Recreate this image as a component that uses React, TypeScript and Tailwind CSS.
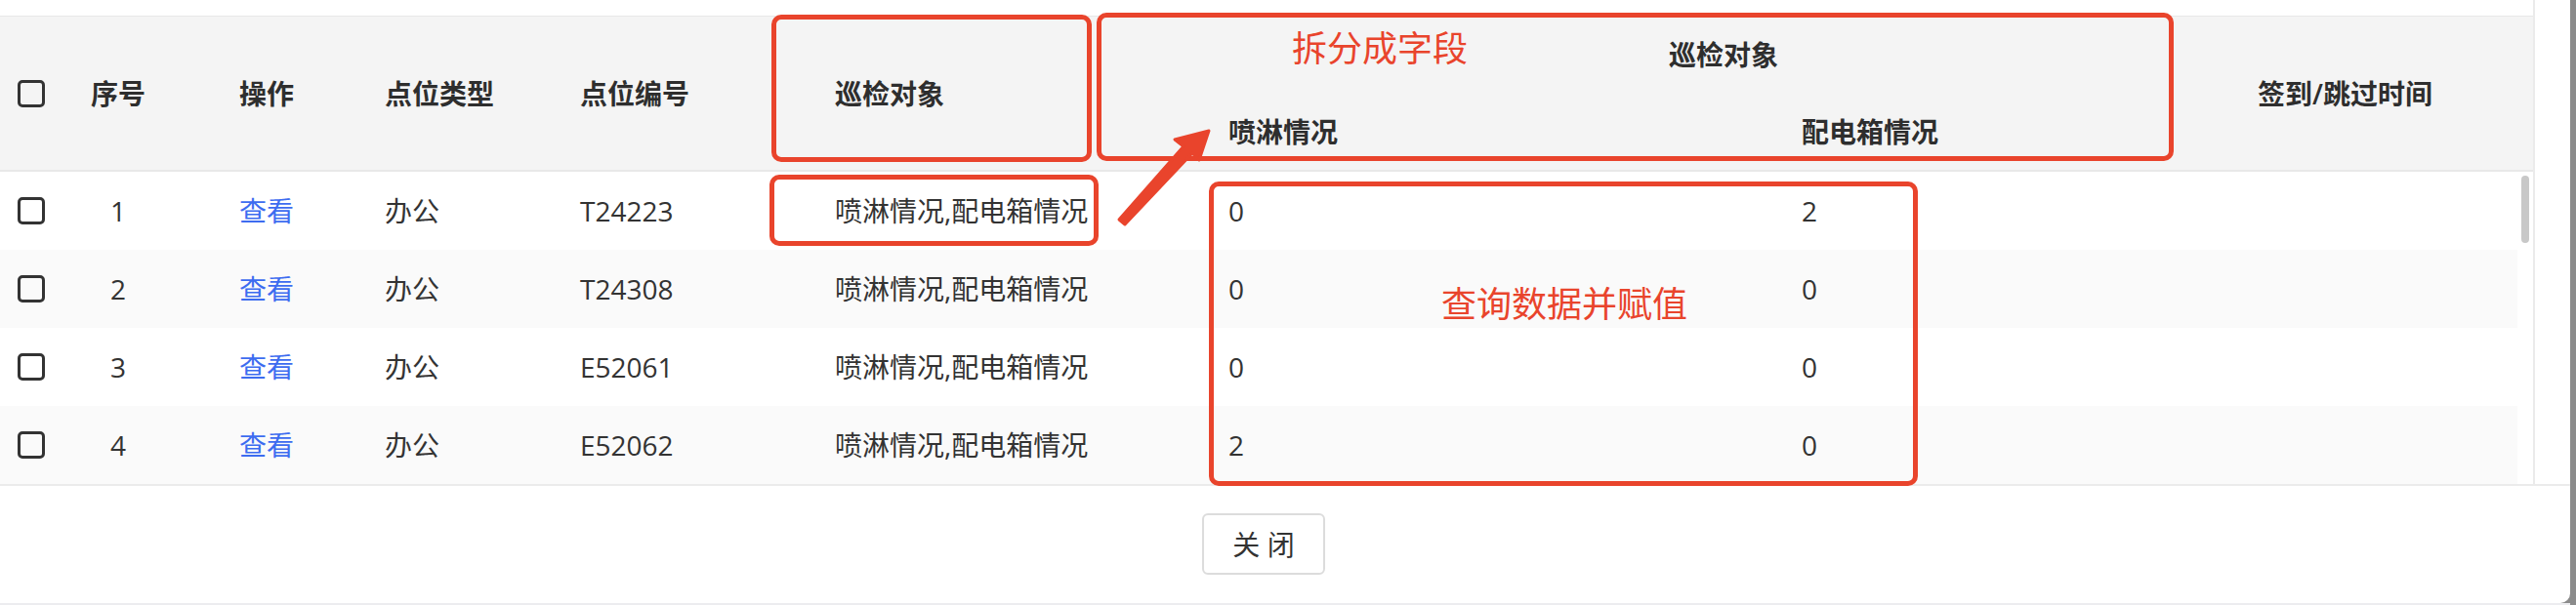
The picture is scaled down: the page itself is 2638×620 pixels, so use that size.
import React from "react";

const headCols =
  "grid grid-cols-[64px_114px_196px_200px_261px_403px_587px_467px_302px] grid-rows-[78px_79px]";
const bodyCols =
  "grid grid-cols-[64px_114px_196px_200px_261px_403px_587px_467px_286px]";

const rows = [
  { n: "1", code: "T24223", a: "0", b: "2" },
  { n: "2", code: "T24308", a: "0", b: "0" },
  { n: "3", code: "E52061", a: "0", b: "0" },
  { n: "4", code: "E52062", a: "2", b: "0" },
];

function Checkbox() {
  return <div className="w-[28px] h-[28px] border-[3px] border-[#333333] rounded-[5px]" />;
}

export default function App() {
  return (
    <div className="w-[2638px] h-[620px] bg-[#8b8b8b] flex [font-family:'Open_Sans','Noto_Sans_CJK_SC',sans-serif] text-[28px] leading-none text-[#333333]">
      <div className="w-[2632px] flex flex-col">
        <div className="relative h-[618px] bg-white rounded-br-[10px] overflow-hidden flex flex-col">
          {/* table area */}
          <div className="flex border-b-2 border-[#ebebeb]">
            <div className="w-[2596px] border-r-2 border-[#ebebeb] pt-[16px]">
              {/* header */}
              <div className={`${headCols} bg-[#f4f4f4] border-t border-b-2 border-[#e8e8e8] font-semibold text-[#2e2e2e]`}>
                <div className="row-span-2 flex items-center pl-[18px]">
                  <Checkbox />
                </div>
                <div className="row-span-2 flex items-center justify-center">序号</div>
                <div className="row-span-2 flex items-center pl-[67px]">操作</div>
                <div className="row-span-2 flex items-center pl-[20px]">点位类型</div>
                <div className="row-span-2 flex items-center pl-[20px]">点位编号</div>
                <div className="row-span-2 flex items-center pl-[20px]">巡检对象</div>
                <div className="col-span-2 flex items-center justify-center">巡检对象</div>
                <div className="row-span-2 flex items-center pl-[20px]">签到/跳过时间</div>
                <div className="flex items-center pl-[20px]">喷淋情况</div>
                <div className="flex items-center pl-[20px]">配电箱情况</div>
              </div>
              {/* body */}
              <div className="flex">
                <div className="w-[2578px] flex flex-col">
                  {rows.map((r, i) => (
                    <div
                      key={r.n}
                      className={`${bodyCols} h-[80px] ${i % 2 === 1 ? "bg-[#fafafa]" : "bg-white"}`}
                    >
                      <div className="flex items-center pl-[18px]">
                        <Checkbox />
                      </div>
                      <div className="flex items-center justify-center">{r.n}</div>
                      <div className="flex items-center pl-[67px] text-[#3d6cf0]">查看</div>
                      <div className="flex items-center pl-[20px]">办公</div>
                      <div className="flex items-center pl-[20px]">{r.code}</div>
                      <div className="flex items-center pl-[20px]">喷淋情况,配电箱情况</div>
                      <div className="flex items-center pl-[20px]">{r.a}</div>
                      <div className="flex items-center pl-[20px]">{r.b}</div>
                      <div />
                    </div>
                  ))}
                </div>
                <div className="w-[16px] pt-[4px] pl-[4px]">
                  <div className="w-[8px] h-[69px] rounded-full bg-[#c8c8c8]" />
                </div>
              </div>
            </div>
            <div className="flex-1" />
          </div>

          {/* footer */}
          <div className="flex justify-center pr-[44px] pt-[28px]">
            <button className="w-[126px] h-[63px] border-2 border-[#dcdcdc] rounded-[6px] bg-white flex items-center justify-center text-[28px] text-[#333333]">
              关 闭
            </button>
          </div>

          {/* annotations */}
          <div className="absolute left-[790px] top-[15px] w-[328px] h-[151px] border-[5px] border-[#e9442c] rounded-[10px]" />
          <div className="absolute left-[1123px] top-[13px] w-[1103px] h-[152px] border-[5px] border-[#e9442c] rounded-[10px]" />
          <div className="absolute left-[788px] top-[179px] w-[337px] h-[73px] border-[5px] border-[#e9442c] rounded-[10px]" />
          <div className="absolute left-[1238px] top-[186px] w-[726px] h-[312px] border-[5px] border-[#e9442c] rounded-[10px]" />
          <div className="absolute left-[1323px] top-[32px] text-[36px] leading-none text-[#e9442c] font-normal">
            拆分成字段
          </div>
          <div className="absolute left-[1476px] top-[294px] text-[36px] leading-none text-[#e9442c] font-normal">
            查询数据并赋值
          </div>
          <svg
            className="absolute left-[1140px] top-[125px]"
            width="110"
            height="115"
            viewBox="0 0 110 115"
          >
            <polygon
              points="6,100 72,25 63,18 98,9 88,39 81,32 12,105"
              fill="#e9442c"
              stroke="#e9442c"
              strokeWidth="3"
              strokeLinejoin="round"
            />
          </svg>
        </div>
        <div className="h-[2px] bg-[#ececef]" />
      </div>
    </div>
  );
}
